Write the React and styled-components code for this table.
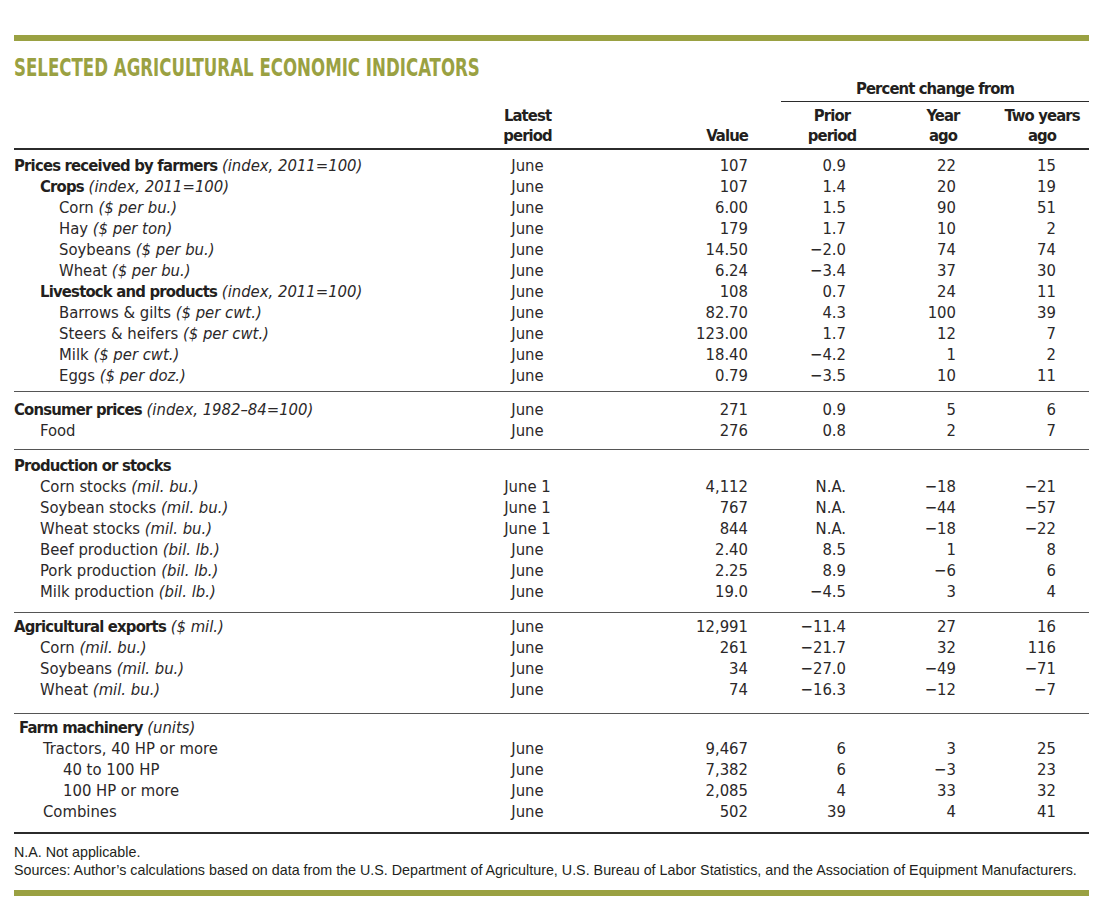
import React from "react";
import styled, { createGlobalStyle } from "styled-components";

const GlobalStyle = createGlobalStyle`
  body {
    margin: 0;
    background: #ffffff;
    color: #231f20;
  }
`;

const COND = `"Liberation Sans Narrow", "DejaVu Sans Condensed", "Liberation Sans", sans-serif`;
const GREEN = "#9aa142";
const COLS = "466px 95px 173px 98px 110px 100px 33px";
const HEAD_COLS = "466px 95px 173px 33px 102px 120px 86px";

const Page = styled.div`
  width: 1075px;
  padding: 35px 0 0 14px;
  font-family: ${COND};
`;

const GreenBar = styled.div`
  height: 6px;
  background: ${GREEN};
`;

const Title = styled.h1`
  margin: 16px 0 0;
  font-size: 24px;
  line-height: 23px;
  font-weight: 700;
  color: ${GREEN};
  white-space: nowrap;
  transform: scaleX(0.77);
  transform-origin: left center;
`;

const Head = styled.div`
  display: grid;
  grid-template-columns: ${HEAD_COLS};
  grid-template-rows: auto auto;
  font-weight: 700;
  font-size: 16.5px;
  line-height: 20px;
  letter-spacing: -0.9px;
  white-space: nowrap;
  border-bottom: 2px solid #2b2b2b;
  padding-bottom: 2px;
`;

const Span = styled.div`
  grid-column: 5 / 8;
  grid-row: 1;
  text-align: center;
  line-height: 18px;
  padding-bottom: 3px;
  border-bottom: 1.5px solid #2b2b2b;
  margin-bottom: 4px;
`;

const HeadCell = styled.div`
  grid-row: 2;
  grid-column: ${(p) => p.$col};
  text-align: ${(p) => p.$align || "center"};
  padding-right: ${(p) => p.$pr || 0}px;
  align-self: end;
`;

const Section = styled.div`
  padding: ${(p) => p.$top}px 0 ${(p) => p.$bottom}px;
  border-bottom: ${(p) => (p.$last ? "2px solid #2b2b2b" : "1px solid #555")};
`;

const Row = styled.div`
  display: grid;
  grid-template-columns: ${COLS};
  height: 21px;
  font-size: 16.5px;
  line-height: 21px;
  color: #2b2829;
  white-space: nowrap;
`;

const Label = styled.div`
  padding-left: ${(p) => p.$indent}px;
`;

const Strong = styled.span`
  font-weight: 700;
  letter-spacing: -0.8px;
  color: #231f20;
`;

const Unit = styled.span`
  font-style: italic;
`;

const Cell = styled.div`
  text-align: ${(p) => p.$align || "right"};
`;

const Notes = styled.div`
  padding-top: 9px;
  font-family: "Liberation Sans", Arial, sans-serif;
  font-size: 14.3px;
  line-height: 18px;
  white-space: nowrap;
`;

const BottomBar = styled(GreenBar)`
  margin-top: 11px;
`;

const INDENT = [0, 26, 45];
const FARM_INDENT = [5, 29, 49];

const sections = [
  {
    top: 5,
    bottom: 4.5,
    rows: [
      [0, "Prices received by farmers", "(index, 2011=100)", "June", "107", "0.9", "22", "15", true],
      [1, "Crops", "(index, 2011=100)", "June", "107", "1.4", "20", "19", true],
      [2, "Corn", "($ per bu.)", "June", "6.00", "1.5", "90", "51"],
      [2, "Hay", "($ per ton)", "June", "179", "1.7", "10", "2"],
      [2, "Soybeans", "($ per bu.)", "June", "14.50", "−2.0", "74", "74"],
      [2, "Wheat", "($ per bu.)", "June", "6.24", "−3.4", "37", "30"],
      [1, "Livestock and products", "(index, 2011=100)", "June", "108", "0.7", "24", "11", true],
      [2, "Barrows & gilts", "($ per cwt.)", "June", "82.70", "4.3", "100", "39"],
      [2, "Steers & heifers", "($ per cwt.)", "June", "123.00", "1.7", "12", "7"],
      [2, "Milk", "($ per cwt.)", "June", "18.40", "−4.2", "1", "2"],
      [2, "Eggs", "($ per doz.)", "June", "0.79", "−3.5", "10", "11"],
    ],
  },
  {
    top: 7.5,
    bottom: 7.5,
    rows: [
      [0, "Consumer prices", "(index, 1982–84=100)", "June", "271", "0.9", "5", "6", true],
      [1, "Food", "", "June", "276", "0.8", "2", "7"],
    ],
  },
  {
    top: 5.5,
    bottom: 9.5,
    rows: [
      [0, "Production or stocks", "", "", "", "", "", "", true],
      [1, "Corn stocks", "(mil. bu.)", "June 1", "4,112", "N.A.", "−18", "−21"],
      [1, "Soybean stocks", "(mil. bu.)", "June 1", "767", "N.A.", "−44", "−57"],
      [1, "Wheat stocks", "(mil. bu.)", "June 1", "844", "N.A.", "−18", "−22"],
      [1, "Beef production", "(bil. lb.)", "June", "2.40", "8.5", "1", "8"],
      [1, "Pork production", "(bil. lb.)", "June", "2.25", "8.9", "−6", "6"],
      [1, "Milk production", "(bil. lb.)", "June", "19.0", "−4.5", "3", "4"],
    ],
  },
  {
    top: 3.5,
    bottom: 12.5,
    rows: [
      [0, "Agricultural exports", "($ mil.)", "June", "12,991", "−11.4", "27", "16", true],
      [1, "Corn", "(mil. bu.)", "June", "261", "−21.7", "32", "116"],
      [1, "Soybeans", "(mil. bu.)", "June", "34", "−27.0", "−49", "−71"],
      [1, "Wheat", "(mil. bu.)", "June", "74", "−16.3", "−12", "−7"],
    ],
  },
  {
    top: 3.5,
    bottom: 9.5,
    farm: true,
    last: true,
    rows: [
      [0, "Farm machinery", "(units)", "", "", "", "", "", true],
      [1, "Tractors, 40 HP or more", "", "June", "9,467", "6", "3", "25"],
      [2, "40 to 100 HP", "", "June", "7,382", "6", "−3", "23"],
      [2, "100 HP or more", "", "June", "2,085", "4", "33", "32"],
      [1, "Combines", "", "June", "502", "39", "4", "41"],
    ],
  },
];

const App = () => {
  return (
    <Page>
      <GlobalStyle />
      <GreenBar />
      <Title>SELECTED AGRICULTURAL ECONOMIC INDICATORS</Title>
      <Head>
        <Span>Percent change from</Span>
        <HeadCell $col="2">
          Latest
          <br />
          period
        </HeadCell>
        <HeadCell $col="3" $align="right">
          Value
        </HeadCell>
        <HeadCell $col="5">
          Prior
          <br />
          period
        </HeadCell>
        <HeadCell $col="6">
          Year
          <br />
          ago
        </HeadCell>
        <HeadCell $col="7" $pr={8}>
          Two years
          <br />
          ago
        </HeadCell>
      </Head>
      {sections.map((s, si) => {
        const indents = s.farm ? FARM_INDENT : INDENT;
        return (
          <Section key={si} $top={s.top} $bottom={s.bottom} $last={s.last}>
            {s.rows.map((r, ri) => {
              const [lvl, name, unit, period, value, prior, year, two, bold] = r;
              return (
                <Row key={ri}>
                  <Label $indent={indents[lvl]}>
                    {bold ? <Strong>{name}</Strong> : name}
                    {unit && (
                      <>
                        {" "}
                        <Unit>{unit}</Unit>
                      </>
                    )}
                  </Label>
                  <Cell $align="center">{period}</Cell>
                  <Cell>{value}</Cell>
                  <Cell>{prior}</Cell>
                  <Cell>{year}</Cell>
                  <Cell>{two}</Cell>
                  <div />
                </Row>
              );
            })}
          </Section>
        );
      })}
      <Notes>
        N.A. Not applicable.
        <br />
        Sources: Author’s calculations based on data from the U.S. Department of Agriculture, U.S. Bureau of Labor
        Statistics, and the Association of Equipment Manufacturers.
      </Notes>
      <BottomBar />
    </Page>
  );
};

export default App;
